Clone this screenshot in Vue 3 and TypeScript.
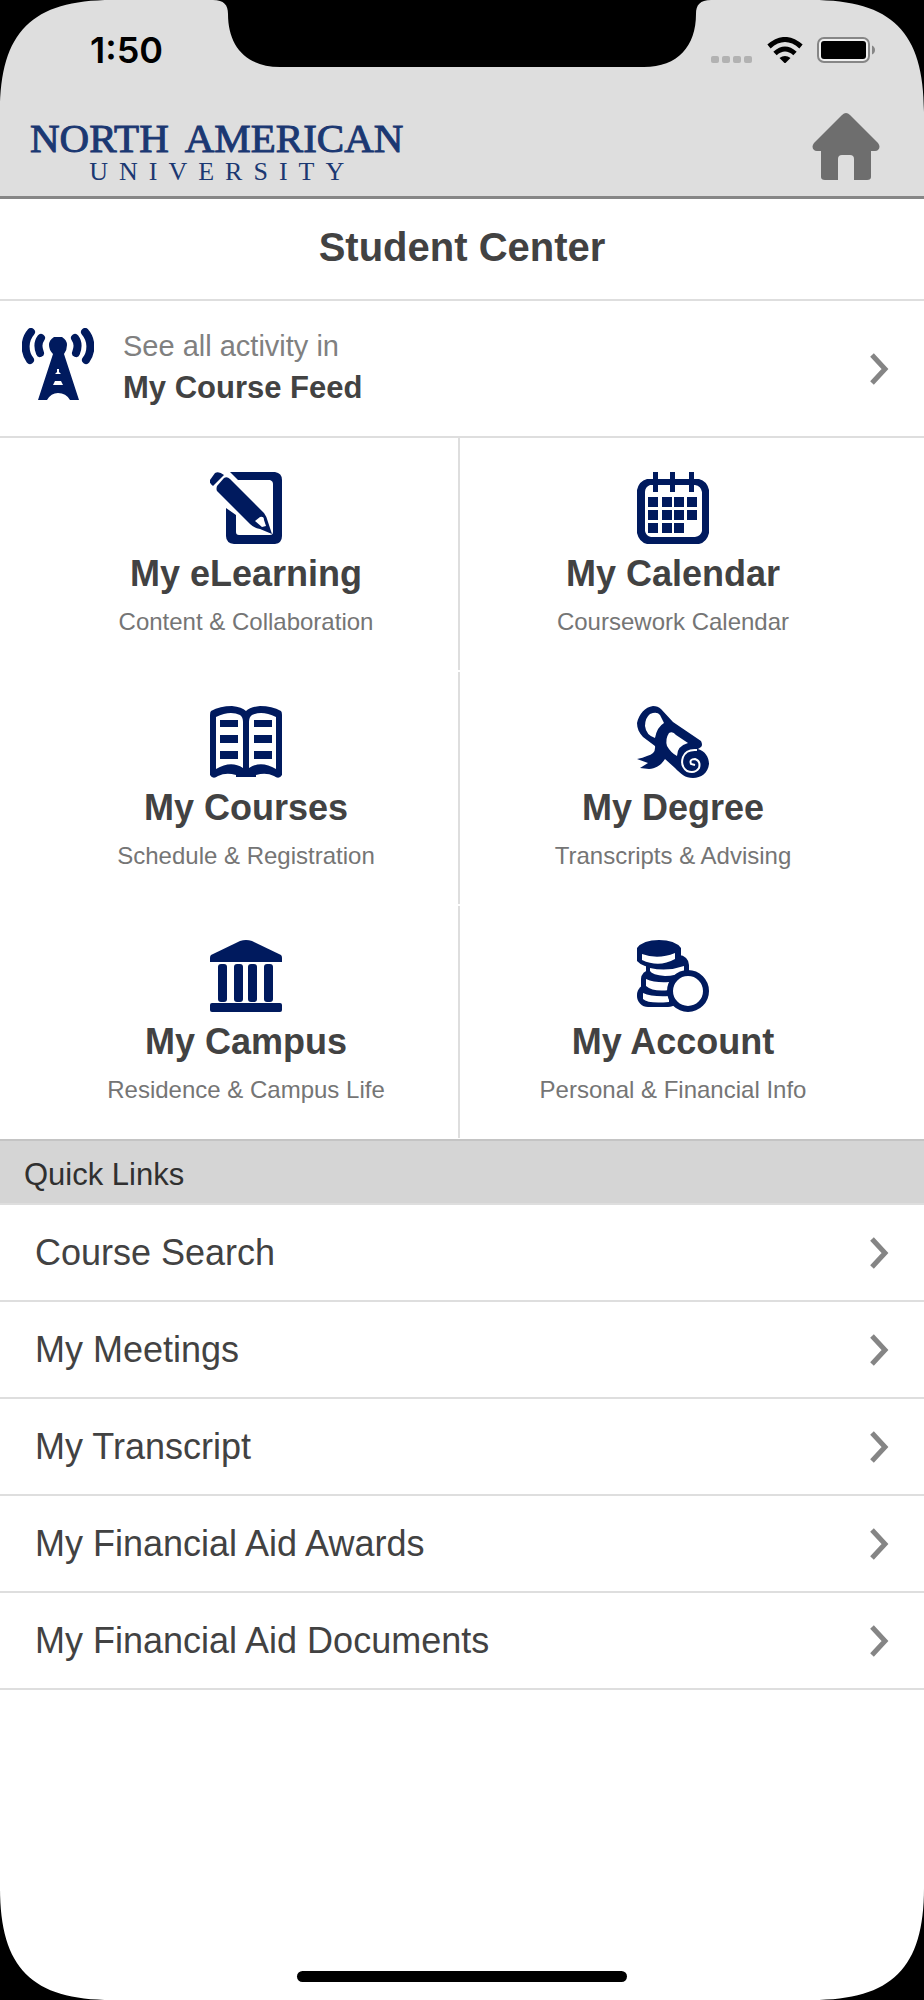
<script setup lang="ts">
type IconName = 'learning' | 'calendar' | 'courses' | 'degree' | 'campus' | 'account'

interface Tile {
  icon: IconName
  title: string
  subtitle: string
}

const tiles: Tile[] = [
  { icon: 'learning', title: 'My eLearning', subtitle: 'Content & Collaboration' },
  { icon: 'calendar', title: 'My Calendar', subtitle: 'Coursework Calendar' },
  { icon: 'courses', title: 'My Courses', subtitle: 'Schedule & Registration' },
  { icon: 'degree', title: 'My Degree', subtitle: 'Transcripts & Advising' },
  { icon: 'campus', title: 'My Campus', subtitle: 'Residence & Campus Life' },
  { icon: 'account', title: 'My Account', subtitle: 'Personal & Financial Info' },
]

const quickLinks: string[] = [
  'Course Search',
  'My Meetings',
  'My Transcript',
  'My Financial Aid Awards',
  'My Financial Aid Documents',
]

const corners: string[] = ['top-left', 'top-right', 'bottom-left', 'bottom-right']
const dayColumns: number[] = [11, 25, 37, 50]
const dayRows: number[] = [25, 38, 51]
</script>

<template>
  <div class="screen">
    <header class="top">
      <div class="status">
        <span class="time">1:50</span>
        <div class="indicators">
          <svg class="signal" viewBox="0 0 41 26" aria-hidden="true">
            <rect v-for="n in 4" :key="n" :x="(n - 1) * 11" y="19" width="8" height="7" rx="2" fill="#b2b2b2" />
          </svg>
          <svg class="wifi" viewBox="0 0 36 26" aria-hidden="true">
            <g fill="none" stroke="#000" stroke-width="5">
              <path d="M2 9.500Q18-4.500 34 9.500" />
              <path d="M8 16.500Q18 7.500 28 16.500" />
            </g>
            <path d="M12.500 21Q18 17 23.500 21L18 26.500Z" />
          </svg>
          <svg class="battery" viewBox="0 0 59 26" aria-hidden="true">
            <rect x="1" y="1" width="51" height="24" rx="6" fill="#efefef" stroke="#868686" stroke-width="2" />
            <rect x="4" y="4" width="45" height="18" rx="3" />
            <path d="M55 8.500Q58 10 58 13T55 17.500Z" fill="#868686" />
          </svg>
        </div>
      </div>
      <div class="brand-bar">
        <a class="brand" href="#">
          <span class="brand-main"><span>NORTH</span> <span>AMERICAN</span></span>
          <span class="brand-sub">UNIVERSITY</span>
        </a>
        <a class="home" href="#" aria-label="Home">
          <svg viewBox="0 0 68 68" aria-hidden="true">
            <path
              d="M30 2Q34-2 38 2L66 30Q69 34 66 37Q65 38 63 38H59V64Q59 67 55 67H42V46Q42 42 38 42H30Q26 42 26 46V67H13Q9 67 9 64V38H5Q3 38 2 37Q-1 34 2 30Z"
              fill="#6e6e6e"
            />
          </svg>
        </a>
      </div>
    </header>

    <main>
      <h1 class="page-title">Student Center</h1>

      <a class="feed" href="#">
        <svg class="icon" viewBox="0 0 72 72" aria-hidden="true">
          <g fill="none" stroke="#001a5e" stroke-width="8" stroke-linecap="round">
            <path d="M9 4C2 12 2 24 8 32M19 10C16 14 16 20 18 25M63 4C70 12 70 24 64 32M53 10C56 14 56 20 54 25" />
          </g>
          <path
            fill="#001a5e"
            fill-rule="evenodd"
            d="M32 9H40Q45 12 45 17Q45 22 42 26L57 72H48Q44 65 36 65Q29 65 25 72H16L31 26Q27 22 27 17Q27 12 32 9ZM35 41V44L33 46H39L37 44V41ZM33 53L31 57H41L39 53Z"
          />
        </svg>
        <span class="feed-text">
          <span class="feed-lead">See all activity in</span>
          <strong class="feed-name">My Course Feed</strong>
        </span>
        <svg class="chevron" viewBox="0 0 20 34" aria-hidden="true"><path d="M3 3L16 17L3 31" /></svg>
      </a>

      <nav class="tiles" aria-label="Student areas">
        <a v-for="tile in tiles" :key="tile.title" class="tile" href="#">
          <svg class="icon" viewBox="0 0 72 72" aria-hidden="true">
            <g v-if="tile.icon === 'learning'" fill="#001a5e">
              <path d="M20 0H65Q72 1 72 8V64Q72 71 65 72H24Q16 71 16 64V36L26 43V60Q26 63 29 63H60Q63 63 63 60V12Q63 9 60 8H28Z" />
              <path d="M5 1Q9-1 14 3L3 14Q-1 11 0 8Z" />
              <path fill-rule="evenodd" d="M14 6Q17 4 20 7L54 41Q57 45 58 50L62 62L50 57Q44 56 40 52L7 19Q6 17 7 14ZM45 49L50 45Q54 44 54 48L56 54L52 55Z" />
            </g>
            <g v-else-if="tile.icon === 'calendar'" fill="#001a5e">
              <path fill-rule="evenodd" d="M10 7H62Q70 9 72 18V61Q70 70 62 72H10Q2 70 0 61V18Q2 9 10 7ZM13 13Q8 15 8 20V59Q9 64 14 65H58Q64 64 65 59V20Q64 14 58 13Z" />
              <path d="M16 0H21V20H16ZM33 0H38V20H33ZM52 0H57V20H52Z" />
              <template v-for="y in dayRows" :key="y">
                <template v-for="x in dayColumns" :key="x">
                  <rect v-if="x < 50 || y < 51" :x="x" :y="y" width="10" height="10" />
                </template>
              </template>
            </g>
            <g v-else-if="tile.icon === 'courses'">
              <path fill="#001a5e" d="M1 5Q10 0 22 0Q32 1 36 5Q40 1 50 0Q62 0 71 5Q72 6 72 9V69Q69 74 64 70Q56 66 46 69V71H26V69Q16 66 8 70Q3 74 0 69V9Q0 6 1 5Z" />
              <path fill="#fff" d="M6 11Q20 4 30 9Q33 11 33 16V62Q21 54 6 63ZM66 11Q52 4 42 9Q39 11 39 16V62Q51 54 66 63Z" />
              <path fill="#001a5e" d="M10 14H28V21H10ZM10 29H28V37H10ZM10 45H28V53H10ZM44 14H62V21H44ZM44 29H62V37H44ZM44 45H62V53H44Z" />
            </g>
            <g v-else-if="tile.icon === 'degree'">
              <path
                fill="#001a5e"
                d="M0 17C2 8 8 1 16 0Q21 0 24 3L36 16L64 35Q66 39 64 41L61 43C68 45 72 51 72 58C71 67 64 72 56 72C48 72 44 68 38 62L28 53C24 59 20 62 12 63L3 62L11 57L0 53Q6 52 10 50Q19 48 18 40L6 31C2 27 0 22 0 17Z"
              />
              <path fill="#fff" d="M8 20Q8 12 13 8Q20 5 23 9L27 17Q20 21 18 32Q9 29 8 20ZM32 27Q36 25 39 29L51 37Q40 40 40 50Q34 47 30 40Q28 33 32 27Z" />
              <path fill="none" stroke="#fff" stroke-width="2" d="M60 44Q49 43 46 51Q43 60 50 65Q58 68 62 62Q64 55 58 53Q52 53 54 58L58 59" />
            </g>
            <g v-else-if="tile.icon === 'campus'" fill="#001a5e">
              <path d="M30 1Q36-1 42 1L71 15Q72 16 72 18V22H0V18Q0 16 1 15Z" />
              <rect x="8" y="24" width="9" height="38" rx="3" />
              <rect x="24" y="24" width="9" height="38" rx="3" />
              <rect x="38" y="24" width="9" height="38" rx="3" />
              <rect x="54" y="24" width="9" height="38" rx="3" />
              <rect y="63" width="72" height="9" rx="2" />
            </g>
            <g v-else>
              <g fill="#001a5e">
                <rect x="0" y="44" width="42" height="23" rx="11" />
                <rect x="4" y="30" width="44" height="26" rx="9" />
                <rect x="9" y="15" width="43" height="26" rx="10" />
                <path d="M0 8Q6 0 22 0T44 8V20Q38 29 22 28Q6 28 0 21Z" />
              </g>
              <path
                fill="#fff"
                d="M5 14Q21 20 38 13V19Q22 28 5 20ZM13 28Q30 32 47 26V31Q39 36 28 36Q15 35 13 31ZM9 39Q18 43 32 42V50Q16 52 9 46ZM6 53Q15 57 32 56V62Q11 64 6 59Z"
              />
              <circle cx="51" cy="51" r="18" fill="#fff" stroke="#001a5e" stroke-width="6" />
            </g>
          </svg>
          <strong class="tile-title">{{ tile.title }}</strong>
          <span class="tile-sub">{{ tile.subtitle }}</span>
        </a>
      </nav>

      <section>
        <h2 class="quick-title">Quick Links</h2>
        <ul class="quick-list">
          <li v-for="link in quickLinks" :key="link">
            <a class="quick-link" href="#">
              <span>{{ link }}</span>
              <svg class="chevron" viewBox="0 0 20 34" aria-hidden="true"><path d="M3 3L16 17L3 31" /></svg>
            </a>
          </li>
        </ul>
      </section>
    </main>

    <footer class="bottom"><div class="home-indicator"></div></footer>

    <svg class="notch" viewBox="0 0 498 67" aria-hidden="true">
      <path d="M0 0C11 0 15 5 15 14C15 46 33 67 67 67H431C465 67 483 46 483 14C483 5 487 0 498 0Z" />
    </svg>
    <svg v-for="corner in corners" :key="corner" class="corner" :class="corner" viewBox="0 0 112 112" aria-hidden="true">
      <path d="M0 0H112C32 0 0 32 0 112Z" />
    </svg>
  </div>
</template>

<style>
body {
  margin: 0;
}
</style>

<style scoped>
.screen {
  position: relative;
  display: flex;
  flex-direction: column;
  min-height: 100vh;
  overflow: hidden;
  background: #fff;
  color: #424242;
  font-family: "Liberation Sans", Arial, sans-serif;
}

a {
  color: inherit;
  text-decoration: none;
}

.top {
  background: #dedede;
  border-bottom: 3px solid #868686;
}

.status {
  display: flex;
  align-items: center;
  justify-content: space-between;
  height: 100px;
  padding: 0 48px 0 90px;
}

.time {
  color: #000;
  font-family: Inter, sans-serif;
  font-size: 36px;
  font-weight: 600;
}

.indicators {
  display: flex;
  align-items: center;
}

.signal {
  width: 41px;
  height: 26px;
  margin-right: 15px;
}

.wifi {
  width: 36px;
  height: 26px;
  margin-right: 14px;
}

.battery {
  width: 59px;
  height: 26px;
}

.brand-bar {
  display: flex;
  align-items: flex-start;
  justify-content: space-between;
  height: 96px;
  padding: 0 44px 0 30px;
}

.brand {
  display: flex;
  flex-direction: column;
  align-items: center;
  padding-top: 16px;
  color: #1b3872;
  font-family: "Liberation Serif", serif;
}

.brand-main {
  display: flex;
  gap: 16px;
  font-size: 41px;
  line-height: 44px;
  -webkit-text-stroke: 1px #1b3872;
}

.brand-sub {
  padding-left: 11px;
  font-size: 26px;
  line-height: 24px;
  letter-spacing: 11px;
}

.home {
  width: 68px;
  height: 68px;
  margin-top: 13px;
}

.home svg {
  display: block;
}

.page-title {
  margin: 0;
  padding-bottom: 4px;
  border-bottom: 2px solid #dedede;
  font-size: 40px;
  line-height: 96px;
  text-align: center;
}

.feed {
  display: flex;
  align-items: center;
  height: 135px;
  padding: 0 35px 0 22px;
  border-bottom: 2px solid #dedede;
}

.icon {
  flex: none;
  width: 72px;
  height: 72px;
}

.feed .icon {
  margin-bottom: 10px;
}

.feed-text {
  display: flex;
  flex: 1;
  flex-direction: column;
  padding: 0 0 4px 29px;
}

.feed-lead {
  color: #808080;
  font-size: 29px;
  line-height: 42px;
}

.feed-name {
  font-size: 31px;
  line-height: 42px;
}

.chevron {
  flex: none;
  width: 20px;
  height: 34px;
}

.chevron path {
  fill: none;
  stroke: #858585;
  stroke-width: 5px;
}

.tiles {
  display: grid;
  grid-template-columns: 460fr 464fr;
  row-gap: 2px;
  padding-bottom: 1px;
}

.tile {
  display: flex;
  flex-direction: column;
  align-items: center;
  box-sizing: border-box;
  min-height: 232px;
  padding: 34px 38px 28px 0;
}

.tile:nth-child(odd) {
  padding: 34px 0 28px 34px;
  border-right: 2px solid #dedede;
}

.tile-title {
  margin-top: 8px;
  font-size: 36px;
  line-height: 44px;
}

.tile-sub {
  margin-top: 8px;
  color: #757575;
  font-size: 24px;
  line-height: 36px;
}

.quick-title {
  margin: 0;
  padding: 6px 24px 0;
  border-top: 2px solid #c4c4c4;
  border-bottom: 2px solid #dedede;
  background: #d5d5d5;
  color: #303030;
  font-size: 31px;
  font-weight: 400;
  line-height: 56px;
}

.quick-list {
  margin: 0;
  padding: 0;
  list-style: none;
}

.quick-link {
  display: flex;
  align-items: center;
  justify-content: space-between;
  box-sizing: border-box;
  min-height: 97px;
  padding: 0 35px;
  border-bottom: 2px solid #dedede;
  font-size: 36px;
}

.bottom {
  display: flex;
  justify-content: center;
  margin-top: auto;
  padding-bottom: 18px;
}

.home-indicator {
  width: 330px;
  height: 11px;
  border-radius: 6px;
  background: #000;
}

.notch {
  position: absolute;
  top: 0;
  left: 50%;
  width: 498px;
  height: 67px;
  transform: translateX(-50%);
}

.corner {
  position: absolute;
  width: 112px;
  height: 112px;
  pointer-events: none;
}

.top-left {
  top: 0;
  left: 0;
}

.top-right {
  top: 0;
  right: 0;
  transform: rotate(90deg);
}

.bottom-left {
  bottom: 0;
  left: 0;
  transform: rotate(-90deg);
}

.bottom-right {
  right: 0;
  bottom: 0;
  transform: rotate(180deg);
}
</style>
